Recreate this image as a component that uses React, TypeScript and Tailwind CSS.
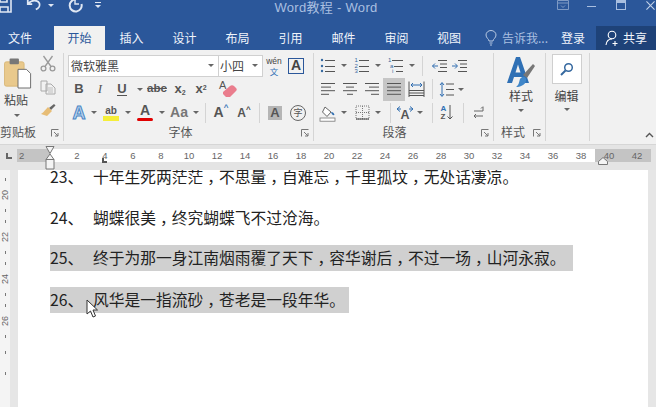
import type { ReactNode } from "react";

const cjk = "font-['Noto_Sans_CJK_SC','Noto_Sans',sans-serif]";
const latin = "font-['Liberation_Sans','Noto_Sans_CJK_SC',sans-serif]";

function Caret({ className = "" }: { className?: string }) {
  return <span className={`block h-0 w-0 border-x-[3px] border-t-[3px] border-x-transparent border-t-[#666] ${className}`} />;
}

function Cell({ w, children }: { w: string; children?: ReactNode }) {
  return <div className={`flex h-full shrink-0 items-center justify-center ${w}`}>{children}</div>;
}

function Sep({ w }: { w: string }) {
  return (
    <Cell w={w}>
      <span className="block h-[20px] w-px bg-[#d4d4d4]" />
    </Cell>
  );
}

function Launcher() {
  return (
    <svg width="8" height="8" viewBox="0 0 8 8" fill="none" stroke="#777" strokeWidth="1">
      <path d="M0.5 7.5V0.5H7.5" />
      <path d="M3 3L7 7M7 4V7H4" />
    </svg>
  );
}

function Lines({ kind }: { kind: "left" | "center" | "right" | "just" }) {
  const rows: Record<string, number[][]> = {
    left: [[2, 16], [2, 12], [2, 16], [2, 10]],
    center: [[2, 16], [5, 13], [2, 16], [6, 12]],
    right: [[2, 16], [6, 16], [2, 16], [8, 16]],
    just: [[2, 16], [2, 16], [2, 16], [2, 16]],
  };
  return (
    <svg width="18" height="16" viewBox="0 0 18 16" stroke="#555" strokeWidth="1" fill="none">
      {rows[kind].map((r, i) => (
        <path key={i} d={`M${r[0]} ${2.5 + i * 3.6}H${r[1]}`} />
      ))}
    </svg>
  );
}

function DistLines() {
  return (
    <svg width="17" height="17" viewBox="0 0 17 17" fill="none" stroke="#555">
      <path d="M1 0.500V16M16 0.500V16M1 9.500H16M1 12H16M1 14.500H16" />
      <path d="M3 4H14M5 2L3 4L5 6M12 2L14 4L12 6" stroke="#2f6db0" />
    </svg>
  );
}

function ListIcon({ kind }: { kind: "bullet" | "number" | "multi" }) {
  const labels = kind === "multi" ? ["1", "a", "i"] : ["1", "2", "3"];
  return (
    <svg width="16" height="16" viewBox="0 0 16 16" fill="none">
      {[2, 8, 13].map((y, i) =>
        kind === "bullet" ? (
          <circle key={y} cx="2" cy={y} r="1.2" fill="#35689f" />
        ) : (
          <text key={y} x={kind === "multi" ? i * 2 : 0.5} y={y + 2} fontSize="6" fill="#35689f" fontFamily="Liberation Sans">
            {labels[i]}
          </text>
        )
      )}
      {[2, 8, 13].map((y, i) => (
        <path key={y} d={`M${kind === "multi" ? 4 + i * 2 : 5} ${y + 0.5}H15`} stroke="#555" strokeWidth="1" />
      ))}
    </svg>
  );
}

function Indent({ dir }: { dir: "in" | "out" }) {
  return (
    <svg width="17" height="14" viewBox="0 0 17 14" fill="none" stroke="#555" strokeWidth="1">
      <path d="M7 1.500H16M9 5H16M9 8.500H16M7 12.500H16" />
      {dir === "in" ? <path d="M1 7H6M4 4.500L6.500 7L4 9.500" stroke="#2f6db0" /> : <path d="M7 7H1.500M4 4.500L1.500 7L4 9.500" stroke="#2f6db0" />}
    </svg>
  );
}

function PasteIcon() {
  return (
    <svg width="28" height="36" viewBox="0 0 30 36" fill="none">
      <rect x="0.5" y="5" width="21" height="26" rx="2" fill="#e9c98c" stroke="#d8b777" />
      <rect x="6" y="1.500" width="10" height="6" rx="1" fill="#777" />
      <path d="M15 13H24L28.500 17.500V33H15Z" fill="#fff" stroke="#666" />
    </svg>
  );
}

function Scissors() {
  return (
    <svg width="16" height="17" viewBox="0 0 16 17" fill="none" stroke="#9a9a9a" strokeWidth="1.3">
      <circle cx="3.500" cy="13.500" r="2.400" />
      <circle cx="12.500" cy="13.500" r="2.400" />
      <path d="M5 11.500L12.500 1M11 11.500L3.500 1" />
    </svg>
  );
}

function CopyIcon() {
  return (
    <svg width="16" height="15" viewBox="0 0 16 15" fill="none" stroke="#aaa">
      <path d="M1 1H7V11H1ZM6 4H11L15 8V14H6Z" fill="#f1f1f1" />
      <path d="M8 8H13M8 10H13M8 12H13" strokeWidth="0.7" />
    </svg>
  );
}

function BrushIcon() {
  return (
    <svg width="16" height="15" viewBox="0 0 16 15" fill="none">
      <path d="M9 5L14 1L15.500 2.500L11 7Z" fill="#666" />
      <path d="M8 4L12 8L7 13L1 11C3 10 4 8 8 4Z" fill="#e7bd76" />
    </svg>
  );
}

function Eraser() {
  return (
    <svg width="22" height="20" viewBox="0 0 22 20">
      <text x="2" y="10" fontSize="11" fill="#555" fontFamily="Liberation Sans">A</text>
      <path d="M6 13L13 7C14 6 16 6 17 7L19 9C20 10 20 11 19 12L13 18H9L6 15Z" fill="#ea7d8d" />
    </svg>
  );
}

function ShadeIcon() {
  return (
    <svg width="18" height="18" viewBox="0 0 18 18" fill="none">
      <path d="M6 3L12 8L8 12.500L3.500 8Z" fill="#fff" stroke="#666" />
      <path d="M12 8C14 8 15 9 15.500 11C14 11.500 12.500 10.500 12 8Z" fill="#2f6db0" />
      <rect x="1" y="14" width="15" height="3.200" fill="#fff" stroke="#777" strokeWidth="0.8" />
    </svg>
  );
}

function BorderIcon() {
  return (
    <svg width="15" height="15" viewBox="0 0 15 15" fill="none" stroke="#777" strokeWidth="1" strokeDasharray="1 1">
      <rect x="1" y="1" width="13" height="13" />
      <path d="M7.500 1V14M1 7.500H14" />
      <path d="M1 14H14" strokeDasharray="none" stroke="#444" />
    </svg>
  );
}

function LineSpacing() {
  return (
    <svg width="16" height="17" viewBox="0 0 16 17" fill="none" stroke="#555">
      <path d="M7 3H15M7 8.500H15M7 14H15" />
      <path d="M3 2V15M1 4L3 1.500L5 4M1 13L3 15.500L5 13" stroke="#2f6db0" />
    </svg>
  );
}

function LayoutIcon() {
  return (
    <svg width="18" height="16" viewBox="0 0 18 16" fill="none">
      <text x="4.500" y="14" fontSize="12.500" fontWeight="bold" fill="#555" fontFamily="Liberation Sans">A</text>
      <path d="M1 4L4 1.500M1 4L4 6.500M1 4H5M17 4L14 1.500M17 4L14 6.500M17 4H13" stroke="#2f6db0" />
    </svg>
  );
}

function Lamp() {
  return (
    <svg width="12" height="16" viewBox="0 0 12 16" fill="none" stroke="#b8c9e2" strokeWidth="1">
      <path d="M4 11C4 9 1 8 1 5A5 4.500 0 0 1 11 5C11 8 8 9 8 11Z" />
      <path d="M4.500 13H7.500M5 15H7" />
    </svg>
  );
}

function StyleIcon() {
  return (
    <svg width="30" height="32" viewBox="0 0 30 32" fill="none">
      <path d="M1 27L10 1H14L23 27H18L16 21H8L6 27ZM9.500 16.500H14.500L12 8.500Z" fill="#2f70b5" />
      <path d="M17 19L27 8L29 10L21 22Z" fill="#777" />
      <path d="M14 23C17 19 21 21 20 25C19 29 14 31 10 31C13 29 13 26 14 23Z" fill="#3f86c9" />
    </svg>
  );
}

function Group({ w, label, launcher, children, labelClass = "justify-center" }: { w: string; label?: string; launcher?: boolean; children: ReactNode; labelClass?: string }) {
  return (
    <div className={`flex shrink-0 flex-col border-r border-[#d5d5d5] ${w}`}>
      <div className="min-h-0 flex-1">{children}</div>
      <div className={`relative flex h-[18px] items-center text-[12px] leading-none text-[#555] ${labelClass}`}>
        <span>{label}</span>
        {launcher ? (
          <span className="absolute right-[4px] top-[6px] flex">
            <Launcher />
          </span>
        ) : null}
      </div>
    </div>
  );
}

// the commas sit in the middle of their cell in the original font
function DocText({ text }: { text: string }) {
  return (
    <span>
      {text.split(/(，)/).map((part, i) =>
        part === "，" ? (
          <span key={i} className="pl-[4px] tracking-[-4px]">{part}</span>
        ) : (
          <span key={i}>{part}</span>
        )
      )}
    </span>
  );
}

const rulerNumbers = [2, 4, 6, 8, 10, 12, 14, 16, 18, 20, 22, 24, 26, 28, 30, 32, 34, 36, 38, 40, 42];

export default function App() {
  return (
    <div className={`flex h-[407px] w-[656px] flex-col overflow-hidden bg-[#e6e6e6] ${cjk}`}>
      {/* title bar, cropped at the top in the picture */}
      <div className="flex h-[26px] shrink-0 items-start overflow-hidden bg-[#2b579a] text-white">
        <div className="flex h-[10px] w-[110px] shrink-0 items-center">
          <Cell w="w-[16px]">
            <svg width="16" height="16" viewBox="0 0 16 16" fill="none" stroke="#dfe7f3" strokeWidth="1.6" className="-ml-[8px] shrink-0">
              <path d="M1 1H15V15H1ZM4 1V5H11V1M4 15V10H12V15" />
            </svg>
          </Cell>
          <Cell w="w-[28px] ml-[4px]">
            <svg width="16" height="14" viewBox="0 0 18 14" fill="none" stroke="#dfe7f3" strokeWidth="2" className="shrink-0">
              <path d="M2 1V6H7M2.500 5.500C6 1 13 1 15 5C16 8 14 11 11 12" />
            </svg>
          </Cell>
          <Caret className="border-t-[#dfe7f3]" />
          <Cell w="w-[32px] ml-[5px]">
            <svg width="15" height="15" viewBox="0 0 15 15" fill="none" stroke="#dfe7f3" strokeWidth="2" className="shrink-0">
              <path d="M8 1.500A6 6 0 1 0 13.500 6" />
              <path d="M7 0V6H11" strokeWidth="1.4" />
            </svg>
          </Cell>
          <div className="ml-[4px] flex flex-col items-center gap-[2px]">
            <span className="block h-px w-[6px] bg-[#dfe7f3]" />
            <Caret className="border-t-[#dfe7f3]" />
          </div>
        </div>
        <div className={`w-[331px] shrink-0 pl-[101px] text-center text-[13px] leading-[16px] tracking-[0.3px] text-[#a9bfe0] ${latin}`}>Word教程 - Word</div>
        <div className="ml-auto flex h-[10px] items-center">
          <Cell w="w-[28px]">
            <svg width="12" height="10" viewBox="0 0 12 10" fill="none" stroke="#7f9ac4">
              <path d="M0.500 0.500H11.500V9.500H0.500ZM0.500 3H11.500M4 5.500L6 7.500L8 5.500" />
            </svg>
          </Cell>
          <Cell w="w-[29px]">
            <span className="mt-[2px] block h-px w-[9px] bg-[#a9bfe0]" />
          </Cell>
          <Cell w="w-[30px] mr-[8px]">
            <span className="block h-[10px] w-[10px] border border-t-[3px] border-[#a9bfe0]" />
          </Cell>
          <Cell w="w-[12px]">
            <svg width="9" height="9" viewBox="0 0 10 10" stroke="#c3d2e8" strokeWidth="1.2">
              <path d="M0.500 0.500L9.500 9.500M9.500 0.500L0.500 9.500" />
            </svg>
          </Cell>
        </div>
      </div>

      {/* tabs */}
      <div className="flex h-[24px] shrink-0 items-center bg-[#2b579a] text-[12px] text-[#f0f4fa]">
        <Cell w="w-[40px]">文件</Cell>
        <div className="ml-[14px] flex h-full w-[51px] shrink-0 items-center justify-center bg-[#f1f1f1] text-[#2b579a]">开始</div>
        <Cell w="w-[53px]">插入</Cell>
        <Cell w="w-[53px]">设计</Cell>
        <Cell w="w-[53px]">布局</Cell>
        <Cell w="w-[53px]">引用</Cell>
        <Cell w="w-[53px]">邮件</Cell>
        <Cell w="w-[53px]">审阅</Cell>
        <Cell w="w-[52px]">视图</Cell>
        <div className="ml-[10px] flex shrink-0 items-center gap-[5px] text-[#a9bfe0]">
          <Lamp />
          <span className="w-[46px] whitespace-nowrap">告诉我...</span>
        </div>
        <Cell w="w-[38px] ml-[6px]">登录</Cell>
        <div className="ml-auto flex h-full w-[60px] shrink-0 items-center justify-center gap-[3px] bg-[#1e4278]">
          <svg width="15" height="16" viewBox="0 0 15 16" fill="none" stroke="#fff" strokeWidth="1.1">
            <circle cx="7" cy="5" r="3.800" />
            <path d="M1 15C1.500 11 4 9 7 9M10 11V16M7.500 13.500H12.500" />
          </svg>
          <span>共享</span>
        </div>
      </div>

      {/* ribbon */}
      <div className="flex h-[94px] shrink-0 items-stretch bg-[#f1f1f1] pt-[3px] pb-[3px] text-[#444]">
        <Group w="w-[64px]" label="剪贴板" launcher labelClass="justify-start">
          <div className="flex h-full">
            <div className="flex w-[36px] flex-col items-start pl-[4px] pt-[3px]">
              <PasteIcon />
              <span className="mt-[1px] text-[12px] leading-[14px]">粘贴</span>
              <Caret className="ml-[10px] mt-[7px]" />
            </div>
            <div className="flex w-[24px] flex-col items-center gap-[8px] pt-[2px]">
              <Scissors />
              <CopyIcon />
              <BrushIcon />
            </div>
          </div>
        </Group>

        <Group w="w-[250px]" label="字体" launcher labelClass="justify-center pr-[16px]">
          <div className="flex flex-col pl-[4px] pt-[1px]">
            <div className="flex h-[23px] items-center">
              <div className="flex h-[22px] w-[151px] shrink-0 items-center justify-between border border-[#d0d0d0] bg-white pl-[2px] pr-[4px] text-[12px]">
                <span>微软雅黑</span>
                <Caret />
              </div>
              <div className="flex h-[22px] w-[44px] shrink-0 items-center justify-between border border-l-0 border-[#d0d0d0] bg-white pl-[1px] pr-[4px] text-[12px]">
                <span>小四</span>
                <Caret />
              </div>
              <Cell w="w-[22px]">
                <div className="flex flex-col items-center text-[8.5px] leading-[10px]">
                  <span className={latin}>wén</span>
                  <span className="text-[#2f70b5]">文</span>
                </div>
              </Cell>
              <Cell w="w-[22px]">
                <span className={`flex h-[16px] w-[16px] items-center justify-center border border-[#2b579a] text-[14px] font-bold ${latin}`}>A</span>
              </Cell>
            </div>
            <div className={`flex h-[24px] items-center text-[13px] text-[#555] ${latin}`}>
              <Cell w="w-[22px]"><b>B</b></Cell>
              <Cell w="w-[20px]"><i className="font-['Liberation_Serif']">I</i></Cell>
              <Cell w="w-[24px]"><span className="border-b border-[#555] font-bold leading-[13px]">U</span></Cell>
              <Cell w="w-[11px]"><Caret /></Cell>
              <Cell w="w-[24px]"><span className="text-[11.5px] font-bold line-through">abc</span></Cell>
              <Cell w="w-[22px]"><span className="font-bold">x<sub className="text-[7px]">2</sub></span></Cell>
              <Cell w="w-[20px]"><span className="font-bold">x<sup className="text-[7px]">2</sup></span></Cell>
              <Cell w="w-[6px]" />
              <Cell w="w-[22px]"><Eraser /></Cell>
            </div>
            <div className={`flex h-[23px] items-center text-[#555] ${latin}`}>
              <Cell w="w-[22px]"><span className="text-[18px] font-bold leading-none text-[#bcd4ee] [-webkit-text-stroke:1px_#4a86c5]">A</span></Cell>
              <Cell w="w-[8px]"><Caret /></Cell>
              <Cell w="w-[26px]">
                <div className="flex flex-col items-center">
                  <span className="text-[10px] font-bold leading-[11px]">ab</span>
                  <span className="block h-[5px] w-[16px] bg-[#f5ee3a]" />
                </div>
              </Cell>
              <Cell w="w-[8px]"><Caret /></Cell>
              <Cell w="w-[26px]">
                <div className="flex flex-col items-center">
                  <span className="text-[14px] font-bold leading-[13px]">A</span>
                  <span className="mt-[1px] block h-[3px] w-[16px] rounded-full bg-[#e00000]" />
                </div>
              </Cell>
              <Cell w="w-[8px]"><Caret /></Cell>
              <Cell w="w-[26px]"><span className="text-[14px] font-bold text-[#777]">Aa</span></Cell>
              <Cell w="w-[8px]"><Caret /></Cell>
              <Sep w="w-[10px]" />
              <Cell w="w-[22px]"><span className="text-[14px] font-bold">A<span className="align-top text-[8px] text-[#2f70b5]">^</span></span></Cell>
              <Cell w="w-[24px]"><span className="text-[12px] font-bold">A<span className="align-top text-[8px] text-[#444]">^</span></span></Cell>
              <Sep w="w-[6px]" />
              <Cell w="w-[26px]">
                <span className="flex h-[14px] w-[14px] items-center justify-center bg-[#b5b5b5] text-[13px] font-bold">A</span>
              </Cell>
              <Cell w="w-[20px]">
                <span className={`flex h-[16px] w-[16px] items-center justify-center rounded-full border border-[#666] text-[9px] ${cjk}`}>字</span>
              </Cell>
            </div>
          </div>
        </Group>

        <Group w="w-[180px]" label="段落" launcher labelClass="justify-center pr-[18px]">
          <div className="flex flex-col pl-[3px] pt-[1px]">
            <div className="flex h-[23px] items-center">
              <Cell w="w-[21px]"><ListIcon kind="bullet" /></Cell>
              <Cell w="w-[12px]"><Caret /></Cell>
              <Cell w="w-[24px]"><ListIcon kind="number" /></Cell>
              <Cell w="w-[8px]"><Caret /></Cell>
              <Cell w="w-[28px]"><ListIcon kind="multi" /></Cell>
              <Cell w="w-[4px]"><Caret className="shrink-0" /></Cell>
              <Sep w="w-[16px]" />
              <Cell w="w-[18px]"><Indent dir="out" /></Cell>
              <Cell w="w-[22px]"><Indent dir="in" /></Cell>
            </div>
            <div className="flex h-[24px] items-center">
              <Cell w="w-[22px]"><Lines kind="left" /></Cell>
              <Cell w="w-[22px]"><Lines kind="center" /></Cell>
              <Cell w="w-[22px]"><Lines kind="right" /></Cell>
              <div className="flex h-[23px] w-[22px] shrink-0 items-center justify-center bg-[#c6c6c6]"><Lines kind="just" /></div>
              <Cell w="w-[22px]"><DistLines /></Cell>
              <Sep w="w-[10px]" />
              <Cell w="w-[20px]"><LineSpacing /></Cell>
              <Cell w="w-[8px]"><Caret /></Cell>
            </div>
            <div className="flex h-[23px] items-center">
              <Cell w="w-[22px]"><ShadeIcon /></Cell>
              <Cell w="w-[10px]"><Caret /></Cell>
              <Cell w="w-[26px]"><BorderIcon /></Cell>
              <Cell w="w-[6px]"><Caret /></Cell>
              <Sep w="w-[18px]" />
              <Cell w="w-[12px]"><span className="shrink-0"><LayoutIcon /></span></Cell>
              <Cell w="w-[18px]"><Caret /></Cell>
              <Sep w="w-[6px]" />
              <Cell w="w-[24px]">
                <span className="flex items-center gap-[1px]">
                  <span className={`flex flex-col text-[8px] font-bold leading-[8px] text-[#2f70b5] ${latin}`}>
                    <span>A</span>
                    <span className="text-[#555]">Z</span>
                  </span>
                  <svg width="6" height="15" viewBox="0 0 6 15" fill="none" stroke="#555">
                    <path d="M3 0V14M0.500 11.500L3 14L5.500 11.500" />
                  </svg>
                </span>
              </Cell>
              <Sep w="w-[8px]" />
              <Cell w="w-[22px]">
                <svg width="13" height="14" viewBox="0 0 13 14" fill="none" stroke="#666">
                  <path d="M2 5H11V1M9 2.500L11 0.500M11 10H2M4 8L2 10L4 12" />
                </svg>
              </Cell>
            </div>
          </div>
        </Group>

        <Group w="w-[52px]" label="样式" launcher labelClass="justify-start pl-[7px]">
          <div className="flex flex-col items-center pt-[3px] pl-[3px] text-[12px]">
            <StyleIcon />
            <span className="mt-[1px] leading-[14px]">样式</span>
            <Caret className="mt-[6px]" />
          </div>
        </Group>

        <Group w="w-[44px]">
          <div className="flex flex-col items-center pr-[2px] pt-[1px] text-[12px]">
            <div className="flex h-[30px] w-[30px] items-center justify-center border border-[#cfcfcf] bg-white">
              <svg width="14" height="14" viewBox="0 0 14 14" fill="none" stroke="#35689f" strokeWidth="1.5">
                <circle cx="8.500" cy="5.500" r="3.800" />
                <path d="M5.500 8.500L1 13" strokeWidth="2" />
              </svg>
            </div>
            <span className="mt-[5px] leading-[14px]">编辑</span>
            <Caret className="mt-[5px]" />
          </div>
        </Group>

        <div className="flex flex-1 items-end justify-end pb-[3px] pr-[2px]">
          <svg width="9" height="6" viewBox="0 0 9 6" fill="none" stroke="#555" strokeWidth="1.4">
            <path d="M1 5L4.500 1.500L8 5" />
          </svg>
        </div>
      </div>

      {/* horizontal ruler */}
      <div className="flex h-[26px] shrink-0 items-start border-t border-[#d6d6d6] bg-[#e4e4e4] pt-[4px]">
        <div className="flex h-[13px] w-[17px] shrink-0 items-center justify-center">
          <span className="block h-[6px] w-[6px] border-b-2 border-l-2 border-[#666]" />
        </div>
        <div className={`relative flex h-[13px] w-[631px] shrink-0 bg-white text-[9.5px] leading-[13px] text-[#666] ${latin}`}>
          <div className="flex w-[33px] shrink-0 items-center bg-[#c4c4c4] pl-[2px]">2</div>
          <div className="w-[13px] shrink-0" />
          {rulerNumbers.map((n, i) => (
            <span key={i} className={`w-[28px] shrink-0 text-center ${n >= 40 ? "bg-[#c4c4c4]" : ""}`}>{n}</span>
          ))}
          <svg className="absolute left-[28px] top-[-3px]" width="10" height="24" viewBox="0 0 10 24" fill="#fff" stroke="#777">
            <path d="M1 0.500H9L5 7.500Z" fill="#f4f4f4" />
            <path d="M5 8L9 13.500H1Z" fill="#f4f4f4" />
            <path d="M1 13.500H9V23H1Z" fill="#f4f4f4" />
          </svg>
          <svg className="absolute left-[581px] top-[8px]" width="10" height="8" viewBox="0 0 10 8" fill="#f4f4f4" stroke="#777">
            <path d="M5 0.500L9.500 4.500V7.500H0.500V4.500Z" />
          </svg>
          <span className="absolute top-[9px] left-[85px] block h-[5px] w-[5px] border-b-2 border-l-2 border-[#555]" />
        </div>
      </div>

      {/* document area */}
      <div className="flex min-h-0 flex-1 overflow-hidden">
        <div className="flex w-[18px] shrink-0 bg-[#e6e6e6]">
          <div className={`flex h-full w-[10px] shrink-0 flex-col items-center bg-[#f4f4f4] pt-[4px] text-[9px] leading-none text-[#666] ${latin}`}>
            {[20, 22, 24, 26, 28].map((n) => (
              <div key={n} className="flex h-[42px] shrink-0 flex-col items-center justify-around">
                <span className="block h-[3px] w-px bg-[#777]" />
                {n < 28 ? <span className="rotate-180 [writing-mode:vertical-rl]">{n}</span> : null}
                <span className="block h-[3px] w-px bg-[#777]" />
              </div>
            ))}
          </div>
        </div>
        <div className="w-[630px] shrink-0 overflow-hidden bg-white pl-[32px] text-[15.75px] leading-[26px] text-[#222]">
          <div className="-mt-[6px] flex h-[26px] whitespace-nowrap">
            <span className="w-[43px] shrink-0">23、</span>
            <DocText text="十年生死两茫茫，不思量，自难忘，千里孤坟，无处话凄凉。" />
          </div>
          <div className="mt-[15px] flex h-[26px] whitespace-nowrap">
            <span className="w-[43px] shrink-0">24、</span>
            <DocText text="蝴蝶很美，终究蝴蝶飞不过沧海。" />
          </div>
          <div className="mt-[14px] flex h-[26px] w-[523px] whitespace-nowrap bg-[#d0d0d0]">
            <span className="w-[43px] shrink-0">25、</span>
            <DocText text="终于为那一身江南烟雨覆了天下，容华谢后，不过一场，山河永寂。" />
          </div>
          <div className="relative mt-[16px] flex h-[26px] w-[299px] whitespace-nowrap bg-[#d0d0d0]">
            <span className="w-[43px] shrink-0">26、</span>
            <DocText text="风华是一指流砂，苍老是一段年华。" />
            <svg className="absolute left-[36px] top-[12px]" width="13" height="19" viewBox="0 0 13 19" fill="#fff" stroke="#333" strokeWidth="1">
              <path d="M1 1V15L4.500 12L7 18L9.500 17L7 11H11.500Z" />
            </svg>
          </div>
        </div>
        <div className="flex-1 bg-[#e6e6e6]" />
      </div>
    </div>
  );
}
